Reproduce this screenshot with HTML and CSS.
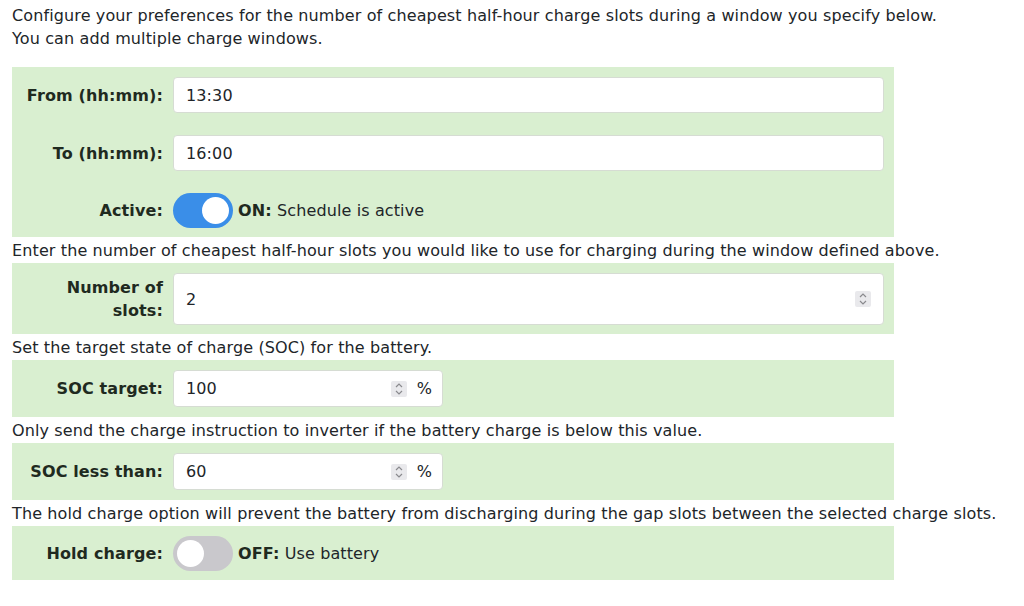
FILE: index.html
```html
<!DOCTYPE html>
<html>
<head>
<meta charset="utf-8">
<link rel="stylesheet" href="styles.css">
</head>
<body>
<div class="page">
  <p class="intro">Configure your preferences for the number of cheapest half-hour charge slots during a window you specify below.<br>You can add multiple charge windows.</p>

  <div class="box">
    <div class="row">
      <label class="lbl">From (hh:mm):</label>
      <div class="field wide"><input class="inp" type="text" value="13:30"></div>
    </div>
    <div class="row">
      <label class="lbl">To (hh:mm):</label>
      <div class="field wide"><input class="inp" type="text" value="16:00"></div>
    </div>
    <div class="row">
      <label class="lbl">Active:</label>
      <div class="switchwrap">
        <span class="toggle on"><span class="knob"></span></span>
        <span class="state"><b>ON:</b> Schedule is active</span>
      </div>
    </div>
  </div>

  <p class="note">Enter the number of cheapest half-hour slots you would like to use for charging during the window defined above.</p>
  <div class="box">
    <div class="row">
      <label class="lbl">Number of slots:</label>
      <div class="field wide tall"><input class="inp" type="text" value="2"><span class="spin"><svg width="10" height="14" viewBox="0 0 10 14"><path d="M2 5 L5 2 L8 5 M2 9 L5 12 L8 9" fill="none" stroke="#8a8a8e" stroke-width="1.2"/></svg></span></div>
    </div>
  </div>

  <p class="note">Set the target state of charge (SOC) for the battery.</p>
  <div class="box pad">
    <div class="row">
      <label class="lbl">SOC target:</label>
      <div class="field narrow"><input class="inp" type="text" value="100"><span class="spin"><svg width="10" height="14" viewBox="0 0 10 14"><path d="M2 5 L5 2 L8 5 M2 9 L5 12 L8 9" fill="none" stroke="#8a8a8e" stroke-width="1.2"/></svg></span><span class="unit">%</span></div>
    </div>
  </div>

  <p class="note">Only send the charge instruction to inverter if the battery charge is below this value.</p>
  <div class="box pad">
    <div class="row">
      <label class="lbl">SOC less than:</label>
      <div class="field narrow"><input class="inp" type="text" value="60"><span class="spin"><svg width="10" height="14" viewBox="0 0 10 14"><path d="M2 5 L5 2 L8 5 M2 9 L5 12 L8 9" fill="none" stroke="#8a8a8e" stroke-width="1.2"/></svg></span><span class="unit">%</span></div>
    </div>
  </div>

  <p class="note">The hold charge option will prevent the battery from discharging during the gap slots between the selected charge slots.</p>
  <div class="box">
    <div class="row">
      <label class="lbl">Hold charge:</label>
      <div class="switchwrap">
        <span class="toggle off"><span class="knob"></span></span>
        <span class="state"><b>OFF:</b> Use battery</span>
      </div>
    </div>
  </div>
</div>
</body>
</html>
```

FILE: styles.css
```css
* { box-sizing: border-box; }
html, body { margin: 0; padding: 0; background: #fff; }
body {
  font-family: "DejaVu Sans", Verdana, sans-serif;
  font-size: 16px;
  letter-spacing: 0.12px;
  line-height: 23px;
  color: #212529;
}
.page {
  padding: 4px 0 0 12px;
  width: 1000px;
}
p { margin: 0; }
.intro { margin-bottom: 17px; }
.note { margin: 2px 0 1px 0; }
.box {
  width: 882px;
  background: #d9efd0;
  padding: 10px 10px 9px 0;
  display: flex;
  flex-direction: column;
  gap: 22px;
}
.box.pad { padding-bottom: 10px; }
.row {
  display: flex;
  align-items: center;
  gap: 10px;
}
.lbl {
  width: 151px;
  padding-left: 10px;
  flex: none;
  text-align: right;
  font-weight: bold;
  color: #1f2a1f;
}
.field {
  display: flex;
  align-items: center;
  background: #fff;
  border: 1px solid #d6dcd3;
  border-radius: 4px;
  height: 36px;
  padding: 0 12px 0 12px;
}
.field.wide { flex: 1; }
.field.tall { height: 52px; }
.field.narrow { width: 270px; height: 37px; padding-right: 10px; }
.inp {
  flex: 1;
  min-width: 0;
  border: none;
  outline: none;
  background: transparent;
  font: inherit;
  letter-spacing: inherit;
  color: #212529;
  padding: 0;
  height: 100%;
}
.spin {
  width: 16px;
  height: 16px;
  background: #e9e9ec;
  border-radius: 2px;
  display: flex;
  align-items: center;
  justify-content: center;
  flex: none;
}
.unit {
  margin-left: 10px;
  color: #212529;
}
.switchwrap {
  display: flex;
  align-items: center;
  gap: 5px;
}
.toggle {
  width: 60px;
  height: 35px;
  border-radius: 18px;
  display: flex;
  align-items: center;
  padding: 0 4px;
  flex: none;
}
.toggle.on { background: #3a8ee8; justify-content: flex-end; }
.toggle.off { background: #c9c8cc; justify-content: flex-start; }
.knob {
  width: 27px;
  height: 27px;
  border-radius: 50%;
  background: #fff;
}
.state b { color: #1f2a1f; }
```
